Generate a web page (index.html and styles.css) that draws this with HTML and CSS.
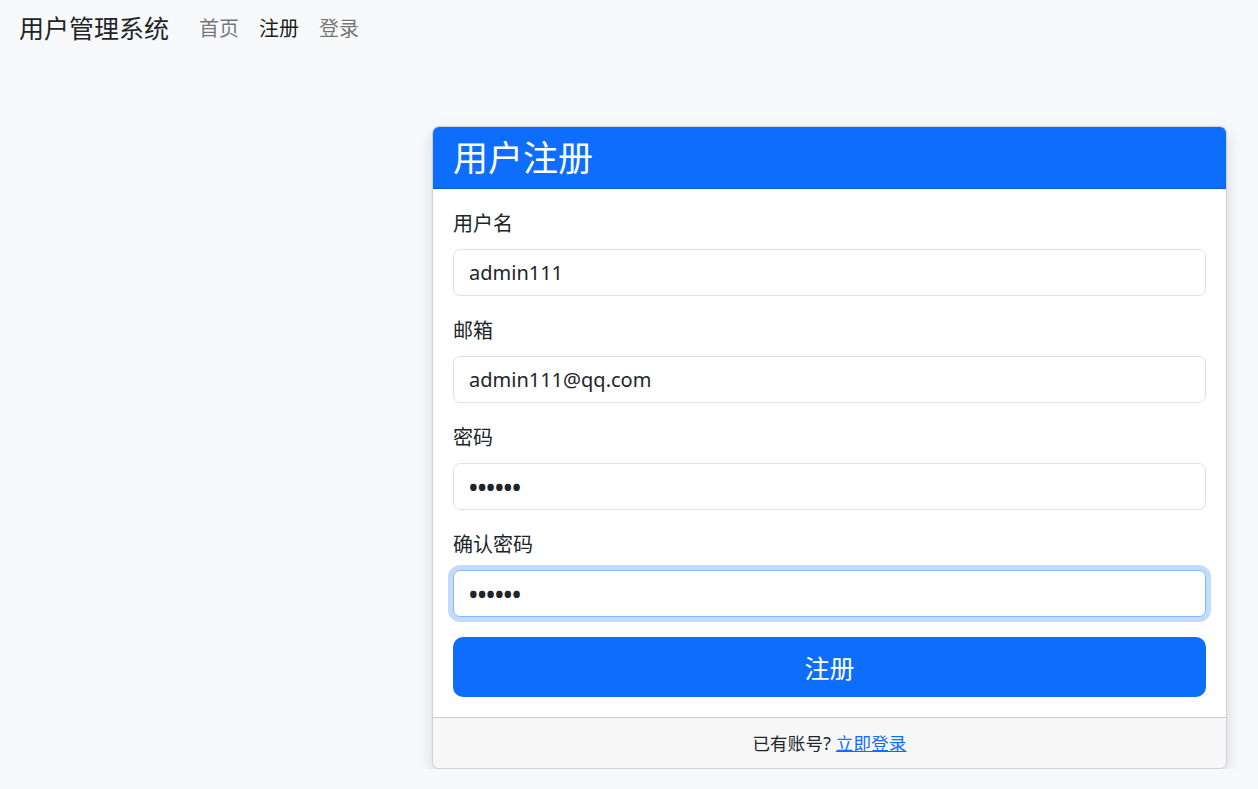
FILE: index.html
```html
<!DOCTYPE html>
<html lang="zh-CN">
<head>
<meta charset="utf-8">
<title>用户注册</title>
<link rel="stylesheet" href="styles.css">
</head>
<body>
<nav class="navbar">
  <a class="brand" href="#">用户管理系统</a>
  <ul class="nav">
    <li><a class="nav-link" href="#">首页</a></li>
    <li><a class="nav-link active" href="#">注册</a></li>
    <li><a class="nav-link" href="#">登录</a></li>
  </ul>
</nav>
<main class="page">
  <div class="card">
    <div class="card-header"><h2 class="title">用户注册</h2></div>
    <form class="card-body">
      <div class="field">
        <label class="label" for="u">用户名</label>
        <input class="control" id="u" type="text" value="admin111">
      </div>
      <div class="field">
        <label class="label" for="e">邮箱</label>
        <input class="control" id="e" type="text" value="admin111@qq.com">
      </div>
      <div class="field">
        <label class="label" for="p">密码</label>
        <input class="control secret" id="p" type="password" value="123456">
      </div>
      <div class="field">
        <label class="label" for="p2">确认密码</label>
        <input class="control secret focus" id="p2" type="password" value="123456">
      </div>
      <button class="btn" type="button">注册</button>
    </form>
    <div class="card-footer"><small>已有账号? <a class="link" href="#">立即登录</a></small></div>
  </div>
</main>
</body>
</html>
```
FILE: styles.css
```css
* { box-sizing: border-box; }
html, body { margin: 0; padding: 0; }
body {
  background: #f8f9fa;
  color: #212529;
  font-family: "Noto Sans", "Noto Sans CJK SC", sans-serif;
  font-size: 20px;
  line-height: 30px;
}
.navbar {
  height: 57px;
  display: flex;
  align-items: center;
  padding: 0 19px;
}
.brand {
  font-size: 25px;
  line-height: 37px;
  color: #212529;
  text-decoration: none;
  margin-right: 20px;
}
.nav { list-style: none; margin: 0; padding: 0; display: flex; }
.nav-link {
  display: block;
  padding: 0 10px;
  color: rgba(0,0,0,.55);
  text-decoration: none;
  font-size: 20px;
}
.nav-link.active { color: rgba(0,0,0,.9); }
.page {
  padding: 69px 31px 0 432px;
}
.card {
  background: #fff;
  border: 1px solid rgba(0,0,0,.175);
  border-radius: 7px;
  box-shadow: 0 6px 16px rgba(0,0,0,.14);
  overflow: hidden;
}
.card-header {
  background: #0d6efd;
  color: #fff;
  padding: 10px 20px;
  border-bottom: 1px solid rgba(0,0,0,.175);
}
.title {
  margin: 0;
  font-size: 35px;
  line-height: 41px;
  font-weight: 400;
}
.card-body { padding: 20px; margin: 0; }
.field { margin-bottom: 20px; }
.label { display: block; margin-bottom: 10px; }
.control {
  display: block;
  width: 100%;
  height: 47px;
  padding: 7px 15px;
  font: inherit;
  color: #212529;
  background: #fff;
  border: 1px solid #dee2e6;
  border-radius: 7px;
  outline: none;
}
.control.secret {
  font-size: 23px;
  font-weight: 700;
}
.control.focus {
  border-color: #86b7fe;
  box-shadow: 0 0 0 5px rgba(13,110,253,.25);
}
.btn {
  display: block;
  width: 100%;
  height: 60px;
  border: 0;
  border-radius: 10px;
  background: #0d6efd;
  color: #fff;
  font-family: inherit;
  font-size: 25px;
  cursor: pointer;
}
.card-footer {
  background: #f7f7f7;
  border-top: 1px solid rgba(0,0,0,.175);
  padding: 10px 20px;
  text-align: center;
}
.card-footer small { font-size: 17.5px; letter-spacing: 0.2px; }
.link { color: #0d6efd; text-decoration: underline; }
```
